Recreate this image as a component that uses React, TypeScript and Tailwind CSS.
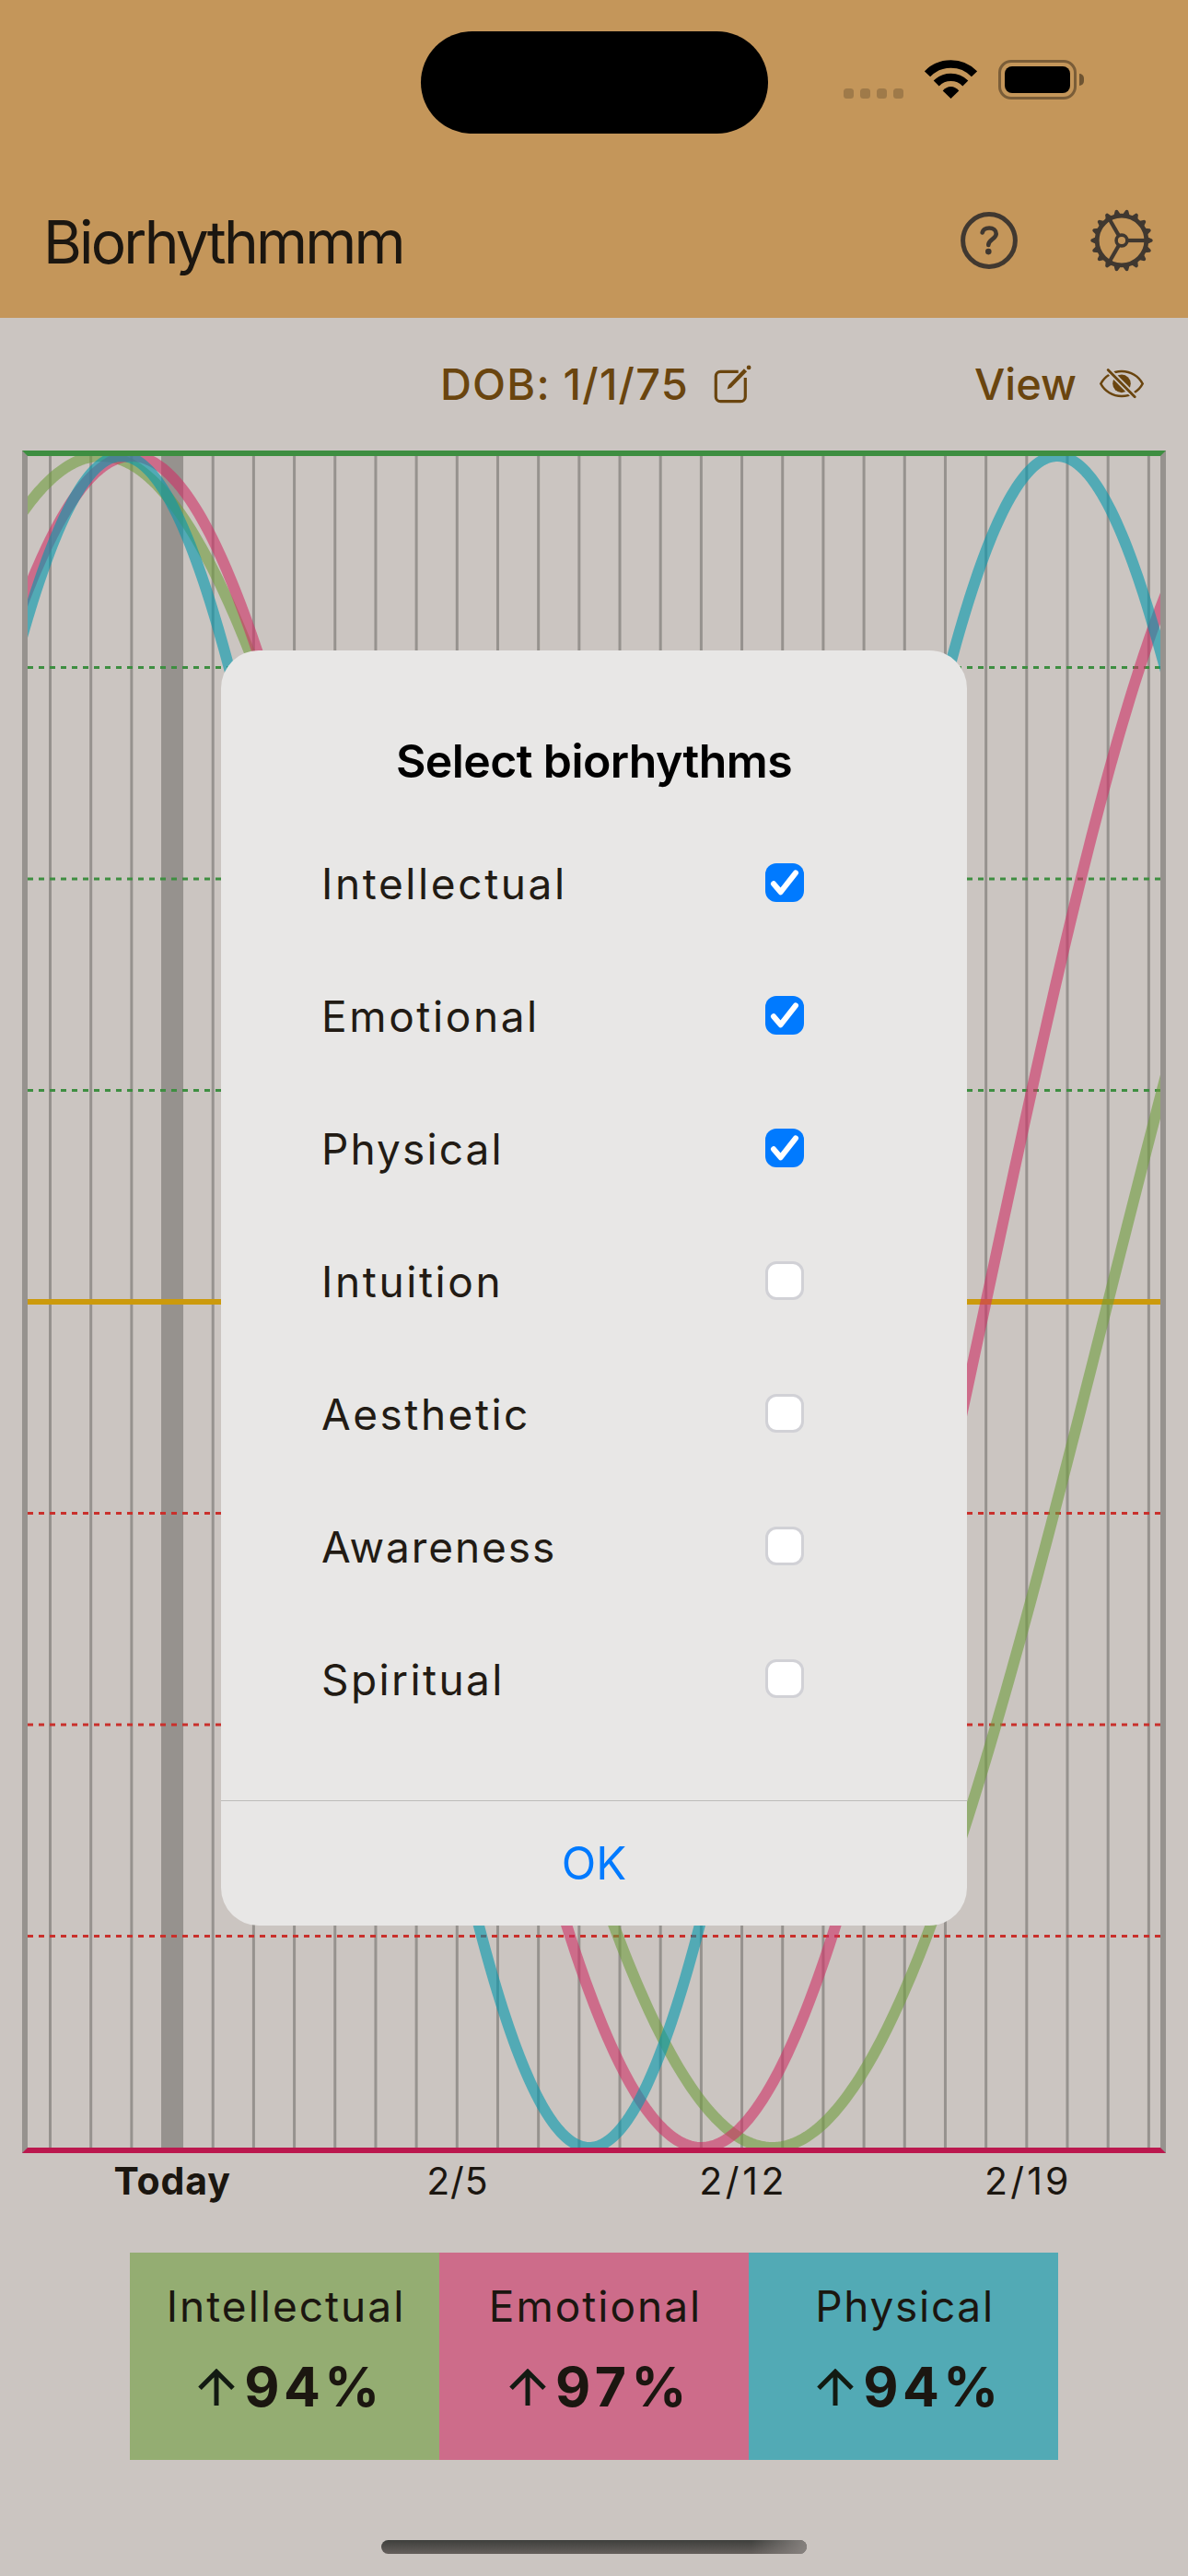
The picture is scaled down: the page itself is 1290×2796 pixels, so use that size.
import React from 'react'

const CHART_W = 1230
const CHART_H = 1836
const MID = CHART_H / 2
const DAY = 44.18
const TODAY = 157

const DAYS = Array.from({ length: 28 }, (_, i) => 24.5 + i * DAY)

const CURVES = [
  { period: 33, peak: -1.75, color: '#6f9d3d' },
  { period: 28, peak: -1, color: '#ce3165' },
  { period: 23, peak: -1.25, color: '#0198ad' },
]

function curvePath(period: number, peak: number) {
  const points: string[] = []
  for (let x = -6; x <= CHART_W + 6; x += 3) {
    const day = (x - TODAY) / DAY
    const y = MID - MID * Math.cos((2 * Math.PI * (day - peak)) / period)
    points.push(`${x},${y.toFixed(2)}`)
  }
  return `M${points.join('L')}`
}

function StatusBar() {
  return (
    <div className="flex h-[177px] items-start pl-[456.5px]">
      <div className="mt-[33.5px] h-[111px] w-[377px] rounded-full bg-black" />
      <div className="mt-[96px] ml-[82.5px] flex gap-[7px]">
        {[0, 1, 2, 3].map((i) => (
          <div key={i} className="size-[11px] rounded-[3.5px] bg-[#9f7a49]" />
        ))}
      </div>
      <svg className="mt-[65px] ml-[23px] h-[42px] w-[57px]" viewBox="0 0 57 42" fill="none">
        <path d="M3 15.3A35.5 35.5 0 0 1 54 15.3" stroke="#000" strokeWidth="8.6" />
        <path d="M12.7 25.5A22.2 22.2 0 0 1 44.3 25.5" stroke="#000" strokeWidth="8.4" />
        <path d="M28.5 42L19.7 33.6Q23.5 29 28.5 29Q33.5 29 37.3 33.6Z" fill="#000" />
      </svg>
      <div className="mt-[65px] ml-[23px] flex h-[43px] w-[85px] items-center justify-center rounded-[14px] border-[3px] border-[#7a5d38]">
        <div className="h-[29px] w-[71px] rounded-[8px] bg-black" />
      </div>
      <div className="mt-[80px] ml-[3px] h-[13px] w-[5px] rounded-r-full bg-[#6e5432]" />
    </div>
  )
}

function HelpIcon() {
  return (
    <svg className="h-[62px] w-[62px]" viewBox="0 0 62 62" fill="none" stroke="#403830">
      <circle cx="31" cy="31" r="28.4" strokeWidth="5" />
      <path
        d="M23.7 22.4C24.5 19 27.5 17.5 31.2 17.5C35.6 17.5 38.7 20.1 38.7 23.7C38.7 29.6 30.3 29.8 30.3 36"
        strokeWidth="4.6"
        strokeLinecap="round"
      />
      <circle cx="30.3" cy="43.1" r="3.3" fill="#403830" stroke="none" />
    </svg>
  )
}

function GearIcon() {
  return (
    <svg className="h-[68px] w-[68px]" viewBox="-34 -34 68 68" fill="none" stroke="#403830">
      <circle r="26.8" strokeWidth="4.8" />
      <circle r="5.9" strokeWidth="3.6" />
      {[0, 120, 240].map((a) => (
        <path key={a} d="M7 0H26" strokeWidth="4.2" transform={`rotate(${a})`} />
      ))}
      {Array.from({ length: 18 }, (_, i) => (
        <path
          key={i}
          d="M28 -3.8L33 -1.5Q34.4 0 33 1.5L28 3.8Z"
          fill="#403830"
          stroke="none"
          transform={`rotate(${i * 20})`}
        />
      ))}
    </svg>
  )
}

function EditIcon() {
  return (
    <svg className="h-[42px] w-[42px]" viewBox="0 0 42 42" fill="none" stroke="#6a450f">
      <path
        d="M26.7 7.4H7.3A5 5 0 0 0 2.3 12.4V34.7A5 5 0 0 0 7.3 39.7H29.3A5 5 0 0 0 34.3 34.7V14"
        strokeWidth="3.2"
      />
      <path d="M14.6 26.6L16 21.9L32.9 4.3L36.1 7.3L19 24.8Z" fill="#6a450f" stroke="none" />
      <circle cx="38.1" cy="2.9" r="2.4" fill="#6a450f" stroke="none" />
    </svg>
  )
}

function EyeSlashIcon() {
  return (
    <svg className="h-[34px] w-[48px]" viewBox="0 0 48 34" fill="none">
      <path
        d="M1.3 16.5C5.5 8.5 14 3 24 3S42.5 8.5 46.7 16.5C42.5 24.5 34 30 24 30S5.5 24.5 1.3 16.5Z"
        stroke="#6a450f"
        strokeWidth="2.6"
        strokeLinejoin="round"
      />
      <circle cx="24" cy="16.4" r="9.8" fill="#6a450f" />
      <path d="M6.5 -1.2L41 33.4" stroke="#cbc5c1" strokeWidth="6.4" />
      <path d="M9.2 1.6L38.2 30.8" stroke="#6a450f" strokeWidth="2.8" strokeLinecap="round" />
    </svg>
  )
}

function Chart() {
  return (
    <div className="mx-[24px] h-[1848px] border-[6px] border-x-[#96928e] border-t-[#3e8e41] border-b-[#bb184e]">
      <svg className="block h-[1836px] w-[1230px] overflow-hidden" viewBox={`0 0 ${CHART_W} ${CHART_H}`} fill="none">
        {DAYS.map((x, i) => (
          <path key={i} d={`M${x} 0V${CHART_H}`} stroke="#96928e" strokeWidth={i === 3 ? 24 : 3} />
        ))}
        {[1, 2, 3, 5, 6, 7].map((i) => (
          <path
            key={i}
            d={`M0 ${i * 229.5}H${CHART_W}`}
            stroke={i < 4 ? '#3e8e41' : '#c9302c'}
            strokeWidth="3"
            strokeDasharray="6 6"
          />
        ))}
        <path d={`M0 ${MID}H${CHART_W}`} stroke="#cc9a0c" strokeWidth="6" />
        {CURVES.map((c) => (
          <path
            key={c.period}
            d={curvePath(c.period, c.peak)}
            stroke={c.color}
            strokeWidth="12"
            strokeOpacity="0.6"
          />
        ))}
      </svg>
    </div>
  )
}

const LABELS = [
  { text: 'Today', cls: 'font-bold tracking-[0.9px] pl-[1px]' },
  { text: '2/5', cls: 'tracking-[0.8px] pl-[2px]' },
  { text: '2/12', cls: 'tracking-[3.6px] pl-[4px]' },
  { text: '2/19', cls: 'tracking-[3.2px] pl-[4px]' },
]

const LEGEND = [
  { name: 'Intellectual', value: '94%', bg: 'bg-[#94ad72]', track: 'tracking-[2px]', num: 'tracking-[4.4px]' },
  { name: 'Emotional', value: '97%', bg: 'bg-[#cd6c8a]', track: 'tracking-[2px]', num: 'tracking-[5.6px]' },
  { name: 'Physical', value: '94%', bg: 'bg-[#52aab5]', track: 'tracking-[1.7px]', num: 'tracking-[4.4px]' },
]

const OPTIONS = [
  { name: 'Intellectual', checked: true, track: 'tracking-[2.6px]' },
  { name: 'Emotional', checked: true, track: 'tracking-[2.6px]' },
  { name: 'Physical', checked: true, track: 'tracking-[2.1px]' },
  { name: 'Intuition', checked: false, track: 'tracking-[2.6px]' },
  { name: 'Aesthetic', checked: false, track: 'tracking-[2.5px]' },
  { name: 'Awareness', checked: false, track: 'tracking-[1.9px]' },
  { name: 'Spiritual', checked: false, track: 'tracking-[2.4px]' },
]

function Checkbox({ checked }: { checked: boolean }) {
  if (!checked) {
    return <div className="size-[42px] rounded-[12px] border-[3px] border-[#d1d1d6] bg-white" />
  }
  return (
    <div className="size-[42px] rounded-[12px] bg-[#007aff]">
      <svg className="size-[42px]" viewBox="0 0 42 42" fill="none">
        <path
          d="M9 22.2L16.7 31.2L33 10.3"
          stroke="#fff"
          strokeWidth="6"
          strokeLinecap="round"
          strokeLinejoin="round"
        />
      </svg>
    </div>
  )
}

function Dialog() {
  return (
    <div className="absolute inset-0 flex items-center justify-center">
      <div className="flex h-[1384px] w-[810px] flex-col overflow-hidden rounded-[41px] bg-[#e8e7e6]">
        <h2 className="mt-[90px] text-center text-[50px] leading-[60px] font-semibold tracking-[-0.6px] text-black">
          Select biorhythms
        </h2>
        <div className="mt-[30px] mb-[60px] pr-[177px] pl-[109px]">
          {OPTIONS.map((o) => (
            <div key={o.name} className="flex h-[144px] items-center justify-between">
              <span className={`pt-[2px] text-[46px] leading-[56px] text-[#221b14] ${o.track}`}>{o.name}</span>
              <Checkbox checked={o.checked} />
            </div>
          ))}
        </div>
        <button className="h-[136px] border-t border-[#bdbcba] text-[49px] text-[#007aff]">OK</button>
      </div>
    </div>
  )
}

export default function App() {
  return (
    <div className="relative h-[2796px] w-[1290px] overflow-hidden bg-[#cbc5c1] font-['Inter',sans-serif] text-[#1b1610]">
      <header className="h-[345px] bg-[#c4965a]">
        <StatusBar />
        <div className="flex h-[168px] items-center pr-[38px] pl-[47px]">
          <h1 className="mr-auto pt-[3px] text-[64px] leading-none tracking-[-2.8px]">Biorhythmmm</h1>
          <HelpIcon />
          <div className="ml-[79px]">
            <GearIcon />
          </div>
        </div>
      </header>

      <div className="flex h-[144px] items-center pr-[48px] pl-[478px] text-[47px] font-medium text-[#6a450f]">
        <span className="mr-[27px] pt-px tracking-[1.2px]">DOB: 1/1/75</span>
        <EditIcon />
        <span className="mr-[25px] ml-auto pt-px">View</span>
        <EyeSlashIcon />
      </div>

      <Chart />

      <div className="ml-[32px] flex h-[60px] items-center pt-px text-[41px]">
        {LABELS.map((l) => (
          <div key={l.text} className={`w-[309.26px] text-center ${l.cls}`}>
            {l.text}
          </div>
        ))}
      </div>

      <div className="mx-auto mt-[48px] flex w-[1008px]">
        {LEGEND.map((l) => (
          <div key={l.name} className={`flex h-[225px] w-[336px] flex-col items-center pt-[28px] ${l.bg}`}>
            <div className={`pl-[3px] text-[46px] leading-[60px] ${l.track}`}>{l.name}</div>
            <div className={`mt-[28px] flex items-center pl-[14px] text-[59px] leading-[60px] font-bold ${l.num}`}>
              <svg className="mr-[10px] h-[40px] w-[40px]" viewBox="0 0 40 40" fill="none" stroke="#121a12">
                <path d="M20 40V3M2 21.2L20 3.2L38 21.2" strokeWidth="5" />
              </svg>
              {l.value}
            </div>
          </div>
        ))}
      </div>

      <div className="mx-auto mt-[87px] h-[15px] w-[462px] overflow-hidden rounded-full bg-linear-to-b from-[#3e3f3c] to-[#66605d]">
        <div className="ml-auto h-full w-[60px] bg-linear-to-r from-[#8c8784]/0 to-[#8c8784]/90" />
      </div>

      <Dialog />
    </div>
  )
}
